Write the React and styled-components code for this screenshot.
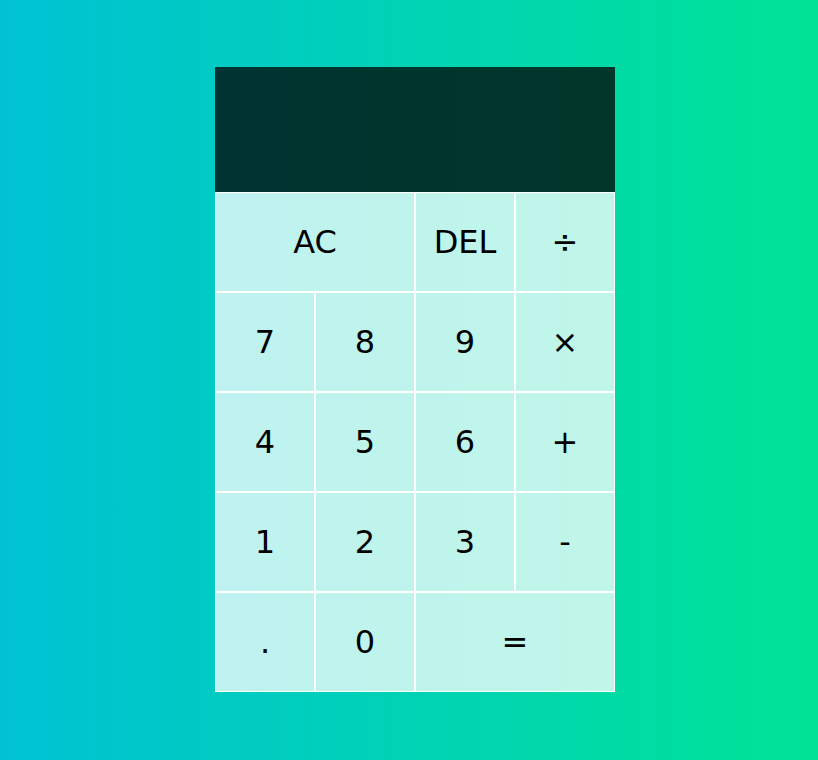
import React from "react";
import styled, { createGlobalStyle } from "styled-components";

const GlobalStyle = createGlobalStyle`
  *, *::before, *::after {
    box-sizing: border-box;
  }

  body {
    margin: 0;
    padding: 0;
    font-family: "DejaVu Sans", "Liberation Sans", sans-serif;
    background: linear-gradient(to right, #00c2d4, #00e396);
  }
`;

// Whole page, calculator centered in it
const CalculatorGrid = styled.div`
  display: grid;
  justify-content: center;
  align-content: center;
  min-height: 100vh;
  padding-left: 12px;
  padding-bottom: 1px;
  grid-template-columns: repeat(4, 100px);
  grid-template-rows: minmax(125px, auto) repeat(5, 100px);
`;

// Display at the top
const Output = styled.div`
  grid-column: 1 / -1;
  background-color: rgba(0, 0, 0, 0.75);
  display: flex;
  flex-direction: column;
  align-items: flex-end;
  justify-content: space-around;
  padding: 10px;
  word-wrap: break-word;
  word-break: break-all;
`;

const PreviousOperand = styled.div`
  color: rgba(255, 255, 255, 0.75);
  font-size: 1.5rem;
`;

const CurrentOperand = styled.div`
  color: white;
  font-size: 2.5rem;
`;

const Button = styled.button`
  cursor: pointer;
  font-family: inherit;
  font-size: 2rem;
  color: #000;
  border: 1px solid white;
  outline: none;
  padding: 0;
  background-color: rgba(255, 255, 255, 0.75);
  grid-column: ${({ span }) => (span ? `span ${span}` : "auto")};

  &:hover {
    background-color: rgba(255, 255, 255, 0.9);
  }
`;

const keys = [
  { label: "AC", span: 2 },
  { label: "DEL" },
  { label: "÷" },
  { label: "7" },
  { label: "8" },
  { label: "9" },
  { label: "×" },
  { label: "4" },
  { label: "5" },
  { label: "6" },
  { label: "+" },
  { label: "1" },
  { label: "2" },
  { label: "3" },
  { label: "-" },
  { label: "." },
  { label: "0" },
  { label: "=", span: 2 },
];

const App = () => {
  return (
    <>
      <GlobalStyle />
      <CalculatorGrid>
        <Output>
          <PreviousOperand></PreviousOperand>
          <CurrentOperand></CurrentOperand>
        </Output>
        {keys.map((k) => (
          <Button key={k.label} span={k.span}>
            {k.label}
          </Button>
        ))}
      </CalculatorGrid>
    </>
  );
};

export default App;
